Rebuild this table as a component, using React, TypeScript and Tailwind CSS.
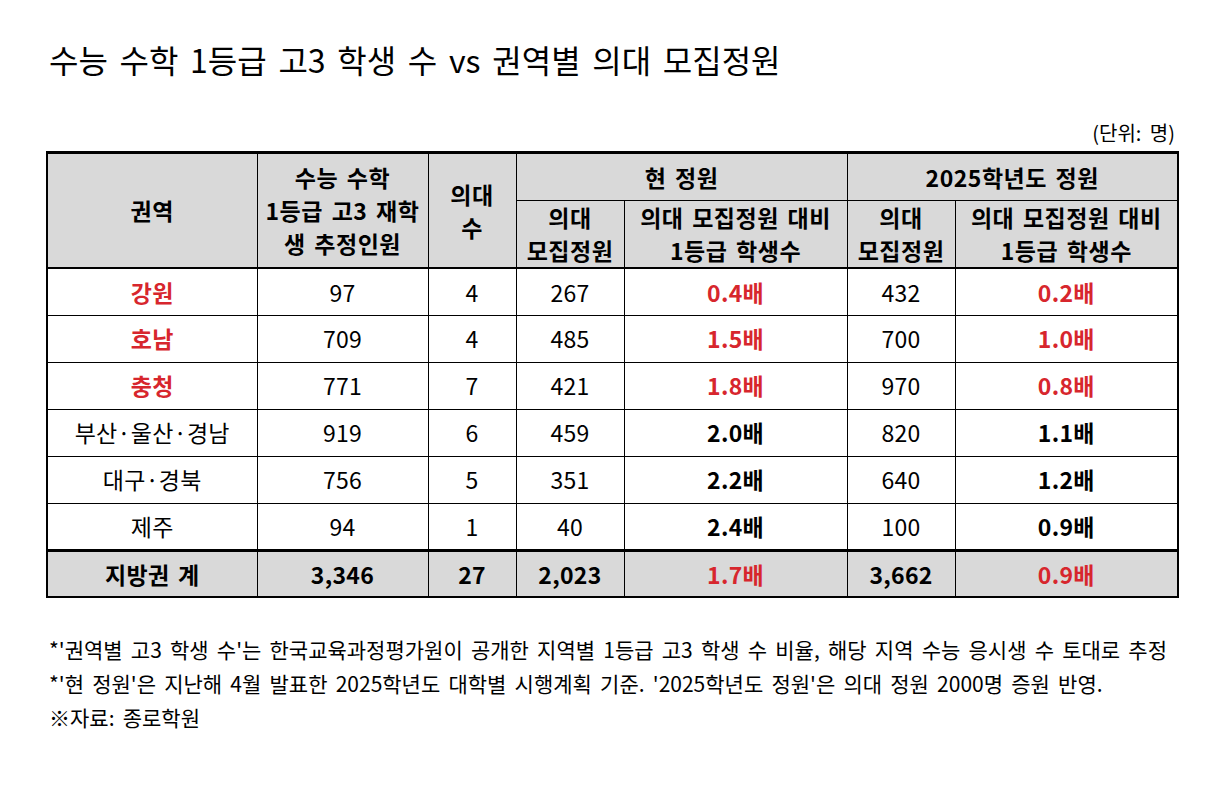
const FONT = '"Noto Sans CJK KR", "Noto Sans", sans-serif';

type Row = {
  region: string;
  hot?: boolean;
  students: string;
  schools: string;
  curQuota: string;
  curRatio: string;
  curHot?: boolean;
  newQuota: string;
  newRatio: string;
  newHot?: boolean;
};

const rows: Row[] = [
  { region: '강원', hot: true, students: '97', schools: '4', curQuota: '267', curRatio: '0.4배', curHot: true, newQuota: '432', newRatio: '0.2배', newHot: true },
  { region: '호남', hot: true, students: '709', schools: '4', curQuota: '485', curRatio: '1.5배', curHot: true, newQuota: '700', newRatio: '1.0배', newHot: true },
  { region: '충청', hot: true, students: '771', schools: '7', curQuota: '421', curRatio: '1.8배', curHot: true, newQuota: '970', newRatio: '0.8배', newHot: true },
  { region: '부산·울산·경남', students: '919', schools: '6', curQuota: '459', curRatio: '2.0배', newQuota: '820', newRatio: '1.1배' },
  { region: '대구·경북', students: '756', schools: '5', curQuota: '351', curRatio: '2.2배', newQuota: '640', newRatio: '1.2배' },
  { region: '제주', students: '94', schools: '1', curQuota: '40', curRatio: '2.4배', newQuota: '100', newRatio: '0.9배' },
];

const th = 'border border-black bg-[#d9d9d9] font-bold text-[23px] leading-[33px] tracking-[0.5px] [word-spacing:3px] text-black text-center align-middle p-0';
const td = 'border border-black text-[23px] tracking-[0.3px] [word-spacing:3px] text-center align-middle h-[47px] p-0';

export default function App() {
  return (
    <div className="w-[1226px] h-[802px] bg-white text-black" style={{ fontFamily: FONT }}>
      <div className="pl-[49px] pt-[36px]">
        <h1 className="text-[32px] leading-[46px] font-normal [word-spacing:4.5px]">
          수능 수학 1등급 고3 학생 수 vs 권역별 의대 모집정원
        </h1>
      </div>

      <div className="w-[1131px] ml-[46px] mt-[38px]">
        <div className="text-right text-[20px] leading-[26px] [word-spacing:4px] pr-[2px] mb-[5px]">(단위: 명)</div>
        <table className="w-full border-collapse table-fixed border-[2px] border-t-[3px] border-black">
          <colgroup>
            <col className="w-[210px]" />
            <col className="w-[171px]" />
            <col className="w-[88px]" />
            <col className="w-[108px]" />
            <col className="w-[223px]" />
            <col className="w-[108px]" />
            <col className="w-[223px]" />
          </colgroup>
          <thead>
            <tr className="h-[48px]">
              <th rowSpan={2} className={th}>권역</th>
              <th rowSpan={2} className={th}>
                수능 수학<br />1등급 고3 재학<br />생 추정인원
              </th>
              <th rowSpan={2} className={th}>의대<br />수</th>
              <th colSpan={2} className={th}>현 정원</th>
              <th colSpan={2} className={th}>2025학년도 정원</th>
            </tr>
            <tr className="h-[67px] border-b-[2px] border-black">
              <th className={th}>의대<br />모집정원</th>
              <th className={th}>의대 모집정원 대비<br />1등급 학생수</th>
              <th className={th}>의대<br />모집정원</th>
              <th className={th}>의대 모집정원 대비<br />1등급 학생수</th>
            </tr>
          </thead>
          <tbody>
            {rows.map((r) => (
              <tr key={r.region}>
                <td className={`${td} ${r.hot ? 'font-bold text-[#d7262d]' : ''}`}>{r.region}</td>
                <td className={td}>{r.students}</td>
                <td className={td}>{r.schools}</td>
                <td className={td}>{r.curQuota}</td>
                <td className={`${td} font-bold ${r.curHot ? 'text-[#d7262d]' : ''}`}>{r.curRatio}</td>
                <td className={td}>{r.newQuota}</td>
                <td className={`${td} font-bold ${r.newHot ? 'text-[#d7262d]' : ''}`}>{r.newRatio}</td>
              </tr>
            ))}
            <tr className="bg-[#d9d9d9] font-bold border-t-[3px] border-black">
              <td className={td}>지방권 계</td>
              <td className={td}>3,346</td>
              <td className={td}>27</td>
              <td className={td}>2,023</td>
              <td className={`${td} text-[#d7262d]`}>1.7배</td>
              <td className={td}>3,662</td>
              <td className={`${td} text-[#d7262d]`}>0.9배</td>
            </tr>
          </tbody>
        </table>
      </div>

      <div className="pl-[49px] mt-[34px] text-[21px] leading-[34px] [word-spacing:3.5px]">
        <p>*'권역별 고3 학생 수'는 한국교육과정평가원이 공개한 지역별 1등급 고3 학생 수 비율, 해당 지역 수능 응시생 수 토대로 추정</p>
        <p>*'현 정원'은 지난해 4월 발표한 2025학년도 대학별 시행계획 기준. '2025학년도 정원'은 의대 정원 2000명 증원 반영.</p>
        <p>※자료: 종로학원</p>
      </div>
    </div>
  );
}
